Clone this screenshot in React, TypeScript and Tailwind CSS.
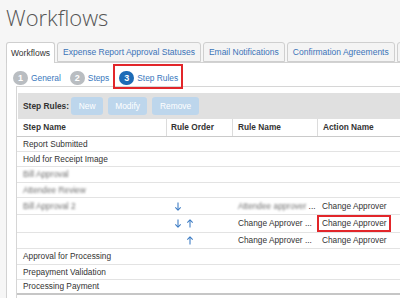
import React from "react";

type Order = "down" | "up" | "both" | undefined;

type Row = {
  name: string;
  blurName?: boolean;
  h: string;
  order?: Order;
  rule?: string;
  blurRule?: boolean;
  action?: string;
};

const rows: Row[] = [
  { name: "Report Submitted", h: "h-[15px]" },
  { name: "Hold for Receipt Image", h: "h-[15px]" },
  { name: "Bill Approval", blurName: true, h: "h-[16px]" },
  { name: "Attendee Review", blurName: true, h: "h-[15px]" },
  {
    name: "Bill Approval 2",
    blurName: true,
    h: "h-[17px]",
    order: "down",
    rule: "Attendee approver",
    blurRule: true,
    action: "Change Approver",
  },
  { name: "", h: "h-[18px]", order: "both", rule: "Change Approver ...", action: "Change Approver" },
  { name: "", h: "h-[16px]", order: "up", rule: "Change Approver ...", action: "Change Approver" },
  { name: "Approval for Processing", h: "h-[16px]" },
  { name: "Prepayment Validation", h: "h-[15px]" },
  { name: "Processing Payment", h: "h-[15px]" },
];

const tabs = ["Expense Report Approval Statuses", "Email Notifications", "Confirmation Agreements", "Approvals"];

function Arrow({ up = false }: { up?: boolean }) {
  return (
    <svg viewBox="0 0 8 10" className={`h-[9px] w-[8px] ${up ? "rotate-180" : ""}`} fill="none" stroke="#3d7cc4" strokeWidth="1.2">
      <path d="M4 0.5V9" />
      <path d="M1 6l3 3 3-3" strokeLinejoin="round" />
    </svg>
  );
}

function Step({ n, label, active = false }: { n: number; label: string; active?: boolean }) {
  return (
    <div className="flex items-center gap-[3px]">
      <span
        className={`grid h-[14px] w-[15px] place-items-center rounded-full text-[9px] font-bold leading-none text-white ${
          active ? "bg-[#1d6bb6]" : "bg-[#b9bdc1]"
        }`}
      >
        {n}
      </span>
      <span className="text-[8.4px] text-[#3a78bd]">{label}</span>
    </div>
  );
}

export default function App() {
  return (
    <div className="relative h-[298px] w-[400px] overflow-hidden bg-[#f6f6f6] font-['Liberation_Sans',Arial,sans-serif] text-[#333]">
      <h1 className="pl-[6px] pt-[6px] font-['Open_Sans',sans-serif] text-[22px] font-light leading-none text-[#555]">
        Workflows
      </h1>

      {/* tab strip */}
      <div className="mt-[14px] flex h-[20px] gap-[2px] whitespace-nowrap pl-[6px]">
        <div className="flex h-[21px] items-center rounded-t-[3px] border border-b-0 border-[#cfcfcf] bg-white px-[4px] text-[8.5px] text-[#333]">
          Workflows
        </div>
        {tabs.map((t) => (
          <div
            key={t}
            className="flex h-[20px] items-center rounded-t-[3px] border border-[#cfcfcf] bg-[#f4f4f4] px-[5px] text-[8.5px] text-[#3a73b8]"
          >
            {t}
          </div>
        ))}
      </div>

      {/* tab body */}
      <div className="ml-[6px] h-full border-l border-t border-[#d2d2d2] bg-white pt-[7px]">
        <div className="flex h-[16px] items-center pl-[6px]">
          <Step n={1} label="General" />
          <div className="ml-[9px]">
            <Step n={2} label="Steps" />
          </div>
          <div className="ml-[10px]">
            <Step n={3} label="Step Rules" active />
          </div>
        </div>

        <div className="ml-[9px] h-full border-l border-t border-[#d6d6d6] pt-[6px]">
          <div className="ml-[1px] flex h-[26px] items-center gap-[5px] bg-[#e0e0e0] pl-[5px]">
            <span className="mr-[-3px] text-[8.4px] font-bold">Step Rules:</span>
            <button className="h-[18px] w-[32px] rounded-[3px] bg-[#bdd6ec] text-[8.4px] text-white">New</button>
            <button className="h-[18px] w-[39px] rounded-[3px] bg-[#bdd6ec] text-[8.4px] text-white">Modify</button>
            <button className="h-[18px] w-[47px] rounded-[3px] bg-[#bdd6ec] text-[8.4px] text-white">Remove</button>
          </div>

          <div className="grid h-[18px] grid-cols-[149px_66px_85px_1fr] border-b border-[#cacaca] text-[8.3px] font-bold">
            <div className="flex items-center pl-[6px]">Step Name</div>
            <div className="flex items-center border-l border-[#dcdcdc] pl-[4px]">Rule Order</div>
            <div className="flex items-center border-l border-[#dcdcdc] pl-[5px]">Rule Name</div>
            <div className="flex items-center border-l border-[#dcdcdc] pl-[5px]">Action Name</div>
          </div>

          {rows.map((r, i) => (
            <div
              key={i}
              className={`grid grid-cols-[149px_66px_85px_1fr] text-[8.3px] ${r.h} ${
                i === rows.length - 1 ? "border-b-2 border-[#c6c6c6]" : "border-b border-[#e3e3e3]"
              }`}
            >
              <div className="flex items-center pl-[6px]">
                {r.blurName ? <span className="text-[#6f6f6f] blur-[1px]">{r.name}</span> : r.name}
              </div>
              <div className="flex items-center pl-[6px]">
                <div className="flex w-[12px] justify-center">{(r.order === "down" || r.order === "both") && <Arrow />}</div>
                <div className="flex w-[12px] justify-center">{(r.order === "up" || r.order === "both") && <Arrow up />}</div>
              </div>
              <div className="flex items-center whitespace-nowrap pl-[6px]">
                {r.blurRule ? (
                  <>
                    <span className="text-[#6f6f6f] blur-[1px]">{r.rule}</span>
                    <span>&nbsp;...</span>
                  </>
                ) : (
                  r.rule
                )}
              </div>
              <div className="flex items-center whitespace-nowrap pl-[5px]">{r.action}</div>
            </div>
          ))}
        </div>
      </div>

      {/* annotation boxes */}
      <div className="absolute left-[113px] top-[64px] h-[25px] w-[70px] border-2 border-[#e2262a]" />
      <div className="absolute left-[317px] top-[215px] h-[17px] w-[74px] border-2 border-[#e2262a]" />
    </div>
  );
}
